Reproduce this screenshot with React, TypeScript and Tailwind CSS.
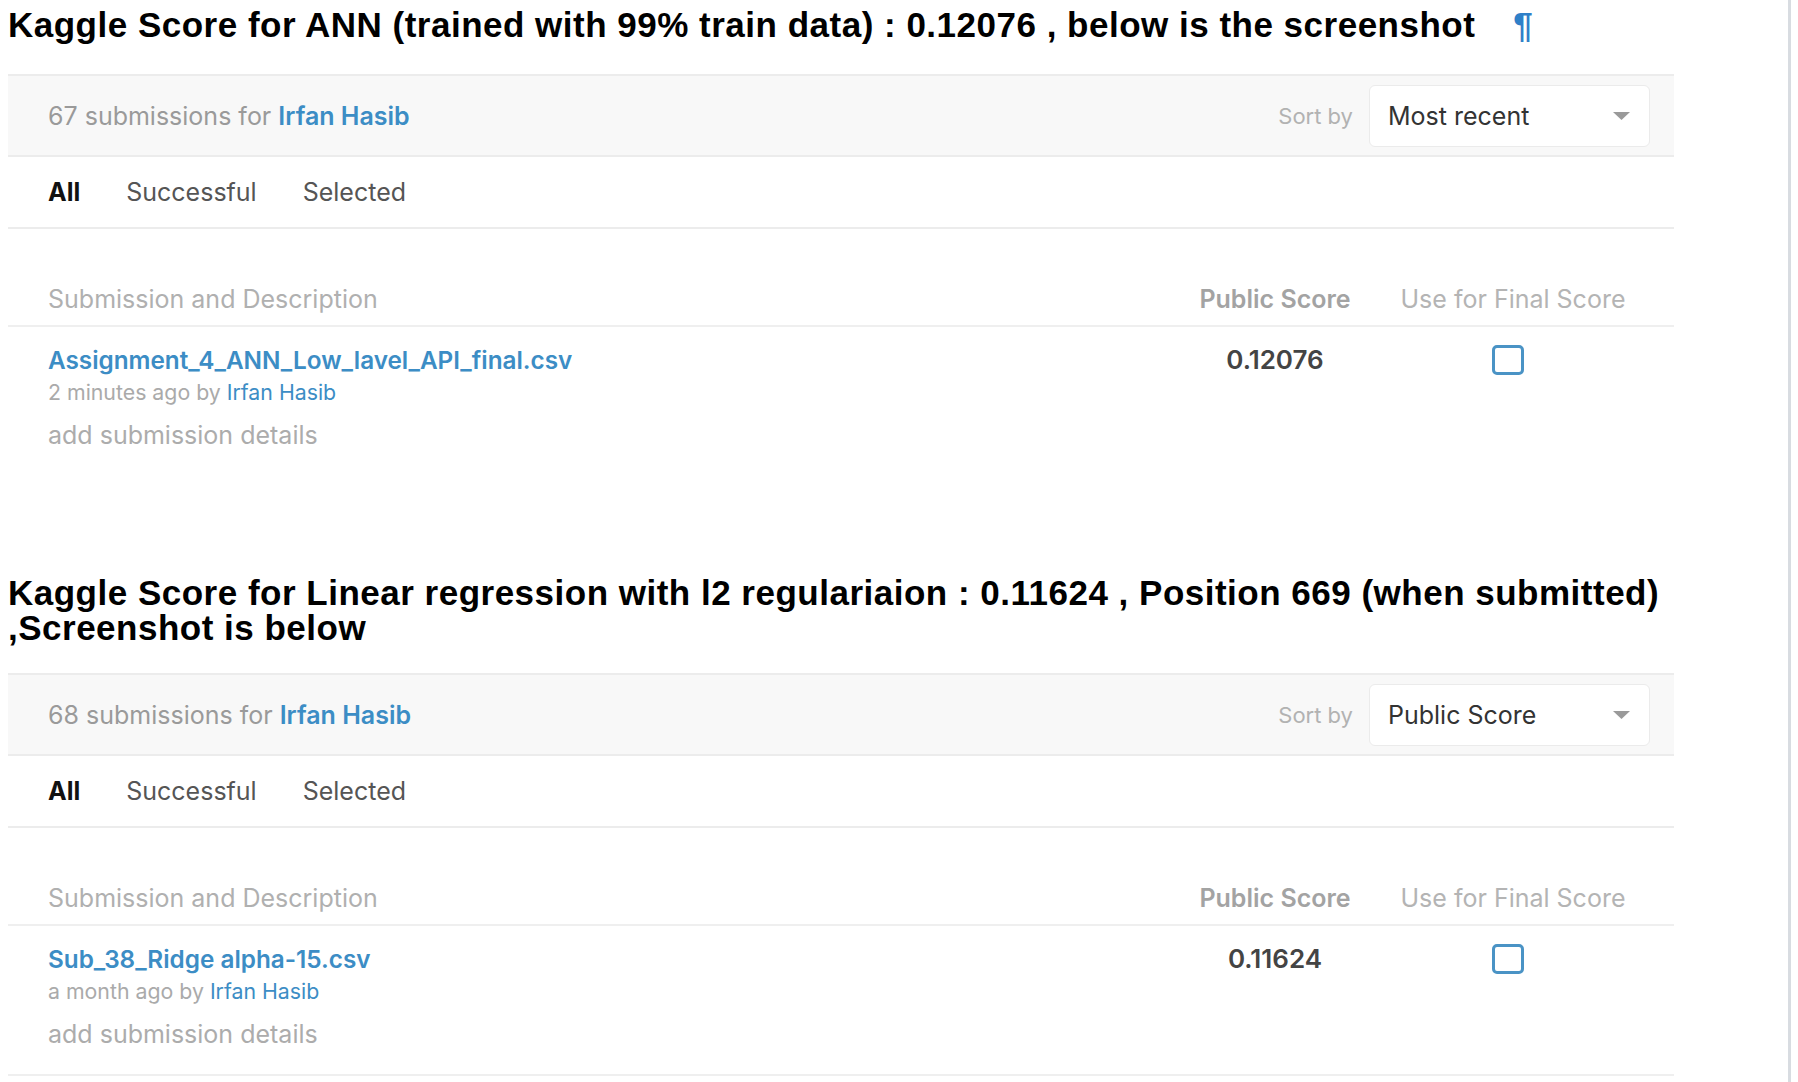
import React from "react";

const ui = { fontFamily: "Inter, 'Liberation Sans', sans-serif" };
const head = { fontFamily: "'Liberation Sans', Arial, Helvetica, sans-serif" };

function Panel({
  count,
  sortLabel,
  title,
  ago,
  score,
  bottomBorder,
}: {
  count: string;
  sortLabel: string;
  title: string;
  ago: string;
  score: string;
  bottomBorder: boolean;
}) {
  return (
    <div className="ml-[8px] w-[1666px]" style={ui}>
      {/* header */}
      <div className="flex h-[83px] items-center justify-between border-t-2 border-b-2 border-[#ececec] bg-[#f8f8f8] pl-[40px] pr-[24px]">
        <div className="text-[25px] leading-[30px] text-[#9a9a9a]">
          {count} submissions for{" "}
          <span className="font-semibold text-[#3c8dc5]">Irfan Hasib</span>
        </div>
        <div className="flex items-center gap-[16px]">
          <span className="text-[22px] leading-[28px] text-[#b2b2b2]">Sort by</span>
          <div className="flex h-[62px] w-[281px] items-center justify-between rounded-[6px] border border-[#ebebeb] bg-white pl-[18px] pr-[19px]">
            <span className="text-[25px] leading-[30px] text-[#333]">{sortLabel}</span>
            <svg width="17" height="8" viewBox="0 0 17 8">
              <path d="M0 0 L17 0 L8.5 8 Z" fill="#9a9a9a" />
            </svg>
          </div>
        </div>
      </div>
      {/* tabs */}
      <div className="flex h-[72px] items-center gap-[46px] border-b-2 border-[#ececec] pl-[40px] text-[25px] leading-[30px]">
        <span className="font-bold text-[#111]">All</span>
        <span className="text-[#555]">Successful</span>
        <span className="text-[#555]">Selected</span>
      </div>
      {/* column headers */}
      <div className="flex h-[98px] border-b-2 border-[#efefef] pt-[55px] text-[25px] leading-[30px]">
        <div className="flex-1 pl-[40px] text-[#b0b0b0]">Submission and Description</div>
        <div className="w-[180px] text-center font-semibold text-[#a3a3a3]">Public Score</div>
        <div className="w-[296px] text-center text-[#b4b4b4]">Use for Final Score</div>
        <div className="w-[13px]" />
      </div>
      {/* row */}
      <div
        className={
          "flex h-[150px] border-b-2 " +
          (bottomBorder ? "border-[#efefef]" : "border-transparent")
        }
      >
        <div className="flex flex-1 flex-col pl-[40px] pt-[18px]">
          <span className="text-[24.3px] font-semibold leading-[30px] text-[#3c8dc5]">{title}</span>
          <span className="mt-[4px] text-[21.3px] leading-[26px] text-[#aaaaaa]">
            {ago} by <span className="text-[#3c8dc5]">Irfan Hasib</span>
          </span>
          <span className="mt-[15px] text-[25px] leading-[30px] text-[#acacac]">add submission details</span>
        </div>
        <div className="w-[180px] pt-[18px] text-center text-[26px] font-semibold leading-[30px] text-[#444]">
          {score}
        </div>
        <div className="flex w-[296px] justify-center pt-[18px]">
          <div className="ml-[-10px] h-[30px] w-[32px] rounded-[5px] border-[3px] border-[#4a93c5] bg-white" />
        </div>
        <div className="w-[13px]" />
      </div>
    </div>
  );
}

export default function App() {
  return (
    <div className="flex h-[1082px] w-full overflow-hidden bg-white">
      <div className="w-[1788px] shrink-0">
        <h1
          className="pl-[8px] pt-[8px] text-[35px] font-bold leading-[34px] tracking-[0.5px] text-black"
          style={head}
        >
          Kaggle Score for ANN (trained with 99% train data) : 0.12076 , below is the screenshot
          <span className="ml-[38px] text-[#2f80c8]">¶</span>
        </h1>
        <div className="mt-[32px]">
          <Panel
            count="67"
            sortLabel="Most recent"
            title="Assignment_4_ANN_Low_lavel_API_final.csv"
            ago="2 minutes ago"
            score="0.12076"
            bottomBorder={false}
          />
        </div>
        <h1
          className="mt-[99px] pl-[8px] text-[35px] font-bold leading-[34.5px] tracking-[0.5px] text-black"
          style={head}
        >
          Kaggle Score for Linear regression with l2 regulariaion : 0.11624 , Position 669 (when submitted)
          <br />
          ,Screenshot is below
        </h1>
        <div className="mt-[28px]">
          <Panel
            count="68"
            sortLabel="Public Score"
            title="Sub_38_Ridge alpha-15.csv"
            ago="a month ago"
            score="0.11624"
            bottomBorder={true}
          />
        </div>
      </div>
      <div className="w-[3px] shrink-0 bg-[#d8dce1]" />
      <div className="flex-1" />
    </div>
  );
}
